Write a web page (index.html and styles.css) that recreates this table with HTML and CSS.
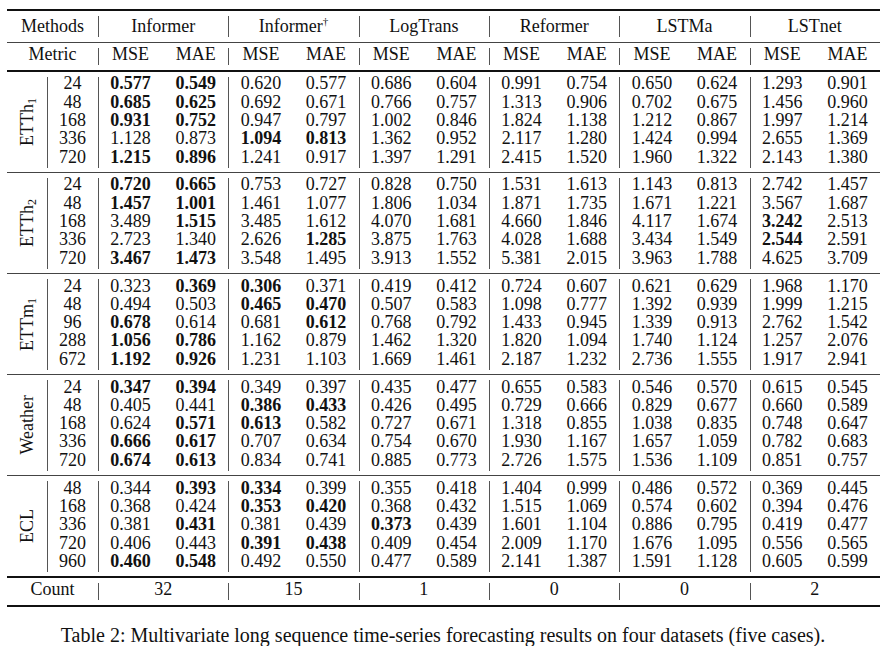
FILE: index.html
```html
<!DOCTYPE html>
<html>
<head>
<meta charset="utf-8">
<link rel="stylesheet" href="styles.css">
</head>
<body>
<div class="tbl">
  <div class="hrow methods">
    <div class="lead">Methods</div>
    <div class="grp bar">Informer</div>
    <div class="grp bar">Informer<sup>†</sup></div>
    <div class="grp bar">LogTrans</div>
    <div class="grp bar">Reformer</div>
    <div class="grp bar">LSTMa</div>
    <div class="grp bar">LSTnet</div>
  </div>
  <div class="hrow metric">
    <div class="lead">Metric</div>
    <div class="grp bar"><span>MSE</span><span>MAE</span></div>
    <div class="grp bar"><span>MSE</span><span>MAE</span></div>
    <div class="grp bar"><span>MSE</span><span>MAE</span></div>
    <div class="grp bar"><span>MSE</span><span>MAE</span></div>
    <div class="grp bar"><span>MSE</span><span>MAE</span></div>
    <div class="grp bar"><span>MSE</span><span>MAE</span></div>
  </div>

  <div class="group">
    <div class="label"><span>ETTh<sub>1</sub></span></div>
    <div class="hz bar"><div>24</div><div>48</div><div>168</div><div>336</div><div>720</div></div>
    <div class="blk bar">
      <div class="r"><b>0.577</b><b>0.549</b></div>
      <div class="r"><b>0.685</b><b>0.625</b></div>
      <div class="r"><b>0.931</b><b>0.752</b></div>
      <div class="r"><span>1.128</span><span>0.873</span></div>
      <div class="r"><b>1.215</b><b>0.896</b></div>
    </div>
    <div class="blk bar">
      <div class="r"><span>0.620</span><span>0.577</span></div>
      <div class="r"><span>0.692</span><span>0.671</span></div>
      <div class="r"><span>0.947</span><span>0.797</span></div>
      <div class="r"><b>1.094</b><b>0.813</b></div>
      <div class="r"><span>1.241</span><span>0.917</span></div>
    </div>
    <div class="blk bar">
      <div class="r"><span>0.686</span><span>0.604</span></div>
      <div class="r"><span>0.766</span><span>0.757</span></div>
      <div class="r"><span>1.002</span><span>0.846</span></div>
      <div class="r"><span>1.362</span><span>0.952</span></div>
      <div class="r"><span>1.397</span><span>1.291</span></div>
    </div>
    <div class="blk bar">
      <div class="r"><span>0.991</span><span>0.754</span></div>
      <div class="r"><span>1.313</span><span>0.906</span></div>
      <div class="r"><span>1.824</span><span>1.138</span></div>
      <div class="r"><span>2.117</span><span>1.280</span></div>
      <div class="r"><span>2.415</span><span>1.520</span></div>
    </div>
    <div class="blk bar">
      <div class="r"><span>0.650</span><span>0.624</span></div>
      <div class="r"><span>0.702</span><span>0.675</span></div>
      <div class="r"><span>1.212</span><span>0.867</span></div>
      <div class="r"><span>1.424</span><span>0.994</span></div>
      <div class="r"><span>1.960</span><span>1.322</span></div>
    </div>
    <div class="blk bar">
      <div class="r"><span>1.293</span><span>0.901</span></div>
      <div class="r"><span>1.456</span><span>0.960</span></div>
      <div class="r"><span>1.997</span><span>1.214</span></div>
      <div class="r"><span>2.655</span><span>1.369</span></div>
      <div class="r"><span>2.143</span><span>1.380</span></div>
    </div>
  </div>

  <div class="group">
    <div class="label"><span>ETTh<sub>2</sub></span></div>
    <div class="hz bar"><div>24</div><div>48</div><div>168</div><div>336</div><div>720</div></div>
    <div class="blk bar">
      <div class="r"><b>0.720</b><b>0.665</b></div>
      <div class="r"><b>1.457</b><b>1.001</b></div>
      <div class="r"><span>3.489</span><b>1.515</b></div>
      <div class="r"><span>2.723</span><span>1.340</span></div>
      <div class="r"><b>3.467</b><b>1.473</b></div>
    </div>
    <div class="blk bar">
      <div class="r"><span>0.753</span><span>0.727</span></div>
      <div class="r"><span>1.461</span><span>1.077</span></div>
      <div class="r"><span>3.485</span><span>1.612</span></div>
      <div class="r"><span>2.626</span><b>1.285</b></div>
      <div class="r"><span>3.548</span><span>1.495</span></div>
    </div>
    <div class="blk bar">
      <div class="r"><span>0.828</span><span>0.750</span></div>
      <div class="r"><span>1.806</span><span>1.034</span></div>
      <div class="r"><span>4.070</span><span>1.681</span></div>
      <div class="r"><span>3.875</span><span>1.763</span></div>
      <div class="r"><span>3.913</span><span>1.552</span></div>
    </div>
    <div class="blk bar">
      <div class="r"><span>1.531</span><span>1.613</span></div>
      <div class="r"><span>1.871</span><span>1.735</span></div>
      <div class="r"><span>4.660</span><span>1.846</span></div>
      <div class="r"><span>4.028</span><span>1.688</span></div>
      <div class="r"><span>5.381</span><span>2.015</span></div>
    </div>
    <div class="blk bar">
      <div class="r"><span>1.143</span><span>0.813</span></div>
      <div class="r"><span>1.671</span><span>1.221</span></div>
      <div class="r"><span>4.117</span><span>1.674</span></div>
      <div class="r"><span>3.434</span><span>1.549</span></div>
      <div class="r"><span>3.963</span><span>1.788</span></div>
    </div>
    <div class="blk bar">
      <div class="r"><span>2.742</span><span>1.457</span></div>
      <div class="r"><span>3.567</span><span>1.687</span></div>
      <div class="r"><b>3.242</b><span>2.513</span></div>
      <div class="r"><b>2.544</b><span>2.591</span></div>
      <div class="r"><span>4.625</span><span>3.709</span></div>
    </div>
  </div>

  <div class="group">
    <div class="label"><span>ETTm<sub>1</sub></span></div>
    <div class="hz bar"><div>24</div><div>48</div><div>96</div><div>288</div><div>672</div></div>
    <div class="blk bar">
      <div class="r"><span>0.323</span><b>0.369</b></div>
      <div class="r"><span>0.494</span><span>0.503</span></div>
      <div class="r"><b>0.678</b><span>0.614</span></div>
      <div class="r"><b>1.056</b><b>0.786</b></div>
      <div class="r"><b>1.192</b><b>0.926</b></div>
    </div>
    <div class="blk bar">
      <div class="r"><b>0.306</b><span>0.371</span></div>
      <div class="r"><b>0.465</b><b>0.470</b></div>
      <div class="r"><span>0.681</span><b>0.612</b></div>
      <div class="r"><span>1.162</span><span>0.879</span></div>
      <div class="r"><span>1.231</span><span>1.103</span></div>
    </div>
    <div class="blk bar">
      <div class="r"><span>0.419</span><span>0.412</span></div>
      <div class="r"><span>0.507</span><span>0.583</span></div>
      <div class="r"><span>0.768</span><span>0.792</span></div>
      <div class="r"><span>1.462</span><span>1.320</span></div>
      <div class="r"><span>1.669</span><span>1.461</span></div>
    </div>
    <div class="blk bar">
      <div class="r"><span>0.724</span><span>0.607</span></div>
      <div class="r"><span>1.098</span><span>0.777</span></div>
      <div class="r"><span>1.433</span><span>0.945</span></div>
      <div class="r"><span>1.820</span><span>1.094</span></div>
      <div class="r"><span>2.187</span><span>1.232</span></div>
    </div>
    <div class="blk bar">
      <div class="r"><span>0.621</span><span>0.629</span></div>
      <div class="r"><span>1.392</span><span>0.939</span></div>
      <div class="r"><span>1.339</span><span>0.913</span></div>
      <div class="r"><span>1.740</span><span>1.124</span></div>
      <div class="r"><span>2.736</span><span>1.555</span></div>
    </div>
    <div class="blk bar">
      <div class="r"><span>1.968</span><span>1.170</span></div>
      <div class="r"><span>1.999</span><span>1.215</span></div>
      <div class="r"><span>2.762</span><span>1.542</span></div>
      <div class="r"><span>1.257</span><span>2.076</span></div>
      <div class="r"><span>1.917</span><span>2.941</span></div>
    </div>
  </div>

  <div class="group">
    <div class="label"><span>Weather</span></div>
    <div class="hz bar"><div>24</div><div>48</div><div>168</div><div>336</div><div>720</div></div>
    <div class="blk bar">
      <div class="r"><b>0.347</b><b>0.394</b></div>
      <div class="r"><span>0.405</span><span>0.441</span></div>
      <div class="r"><span>0.624</span><b>0.571</b></div>
      <div class="r"><b>0.666</b><b>0.617</b></div>
      <div class="r"><b>0.674</b><b>0.613</b></div>
    </div>
    <div class="blk bar">
      <div class="r"><span>0.349</span><span>0.397</span></div>
      <div class="r"><b>0.386</b><b>0.433</b></div>
      <div class="r"><b>0.613</b><span>0.582</span></div>
      <div class="r"><span>0.707</span><span>0.634</span></div>
      <div class="r"><span>0.834</span><span>0.741</span></div>
    </div>
    <div class="blk bar">
      <div class="r"><span>0.435</span><span>0.477</span></div>
      <div class="r"><span>0.426</span><span>0.495</span></div>
      <div class="r"><span>0.727</span><span>0.671</span></div>
      <div class="r"><span>0.754</span><span>0.670</span></div>
      <div class="r"><span>0.885</span><span>0.773</span></div>
    </div>
    <div class="blk bar">
      <div class="r"><span>0.655</span><span>0.583</span></div>
      <div class="r"><span>0.729</span><span>0.666</span></div>
      <div class="r"><span>1.318</span><span>0.855</span></div>
      <div class="r"><span>1.930</span><span>1.167</span></div>
      <div class="r"><span>2.726</span><span>1.575</span></div>
    </div>
    <div class="blk bar">
      <div class="r"><span>0.546</span><span>0.570</span></div>
      <div class="r"><span>0.829</span><span>0.677</span></div>
      <div class="r"><span>1.038</span><span>0.835</span></div>
      <div class="r"><span>1.657</span><span>1.059</span></div>
      <div class="r"><span>1.536</span><span>1.109</span></div>
    </div>
    <div class="blk bar">
      <div class="r"><span>0.615</span><span>0.545</span></div>
      <div class="r"><span>0.660</span><span>0.589</span></div>
      <div class="r"><span>0.748</span><span>0.647</span></div>
      <div class="r"><span>0.782</span><span>0.683</span></div>
      <div class="r"><span>0.851</span><span>0.757</span></div>
    </div>
  </div>

  <div class="group last">
    <div class="label"><span>ECL</span></div>
    <div class="hz bar"><div>48</div><div>168</div><div>336</div><div>720</div><div>960</div></div>
    <div class="blk bar">
      <div class="r"><span>0.344</span><b>0.393</b></div>
      <div class="r"><span>0.368</span><span>0.424</span></div>
      <div class="r"><span>0.381</span><b>0.431</b></div>
      <div class="r"><span>0.406</span><span>0.443</span></div>
      <div class="r"><b>0.460</b><b>0.548</b></div>
    </div>
    <div class="blk bar">
      <div class="r"><b>0.334</b><span>0.399</span></div>
      <div class="r"><b>0.353</b><b>0.420</b></div>
      <div class="r"><span>0.381</span><span>0.439</span></div>
      <div class="r"><b>0.391</b><b>0.438</b></div>
      <div class="r"><span>0.492</span><span>0.550</span></div>
    </div>
    <div class="blk bar">
      <div class="r"><span>0.355</span><span>0.418</span></div>
      <div class="r"><span>0.368</span><span>0.432</span></div>
      <div class="r"><b>0.373</b><span>0.439</span></div>
      <div class="r"><span>0.409</span><span>0.454</span></div>
      <div class="r"><span>0.477</span><span>0.589</span></div>
    </div>
    <div class="blk bar">
      <div class="r"><span>1.404</span><span>0.999</span></div>
      <div class="r"><span>1.515</span><span>1.069</span></div>
      <div class="r"><span>1.601</span><span>1.104</span></div>
      <div class="r"><span>2.009</span><span>1.170</span></div>
      <div class="r"><span>2.141</span><span>1.387</span></div>
    </div>
    <div class="blk bar">
      <div class="r"><span>0.486</span><span>0.572</span></div>
      <div class="r"><span>0.574</span><span>0.602</span></div>
      <div class="r"><span>0.886</span><span>0.795</span></div>
      <div class="r"><span>1.676</span><span>1.095</span></div>
      <div class="r"><span>1.591</span><span>1.128</span></div>
    </div>
    <div class="blk bar">
      <div class="r"><span>0.369</span><span>0.445</span></div>
      <div class="r"><span>0.394</span><span>0.476</span></div>
      <div class="r"><span>0.419</span><span>0.477</span></div>
      <div class="r"><span>0.556</span><span>0.565</span></div>
      <div class="r"><span>0.605</span><span>0.599</span></div>
    </div>
  </div>

  <div class="hrow count">
    <div class="lead">Count</div>
    <div class="grp bar">32</div>
    <div class="grp bar">15</div>
    <div class="grp bar">1</div>
    <div class="grp bar">0</div>
    <div class="grp bar">0</div>
    <div class="grp bar">2</div>
  </div>
</div>
<p class="caption">Table 2: Multivariate long sequence time-series forecasting results on four datasets (five cases).</p>
</body>
</html>
```

FILE: styles.css
```css
html, body {
  margin: 0;
  padding: 0;
  background: #ffffff;
}

body {
  font-family: "Liberation Serif", "Times New Roman", Tinos, serif;
  font-size: 18px;
  color: #111111;
}

.tbl {
  margin: 9px 0 0 7px;
  width: 873px;
  border-top: 2px solid #111111;
}

.hrow {
  display: flex;
}

.hrow .lead {
  width: 91px;
  flex: none;
  text-align: center;
}

.hrow .grp {
  flex: 1 1 0;
  display: flex;
  justify-content: center;
}

.hrow .grp span {
  flex: 1 1 0;
  text-align: center;
}

.methods {
  height: 31px;
  line-height: 31px;
  border-bottom: 1px solid #444444;
}

.methods .grp,
.count .grp {
  display: block;
  text-align: center;
}

.methods sup {
  font-size: 11px;
  line-height: 0;
  vertical-align: 7px;
}

.metric {
  height: 27px;
  line-height: 23px;
  border-bottom: 2px solid #111111;
}

.count {
  height: 27px;
  line-height: 23px;
  border-top: 2px solid #111111;
  border-bottom: 2px solid #111111;
}

.bar {
  background-image: linear-gradient(#555555, #555555);
  background-repeat: no-repeat;
  background-position: 0 5px;
  background-size: 1px calc(100% - 10px);
}

.group .bar {
  background-size: 1px calc(100% - 9px);
}

.group {
  display: flex;
  border-bottom: 1px solid #444444;
  line-height: 18.3px;
}

.group.last {
  border-bottom: none;
}

.label {
  width: 40px;
  flex: none;
  display: flex;
  align-items: center;
  justify-content: center;
}

.label span {
  writing-mode: vertical-rl;
  transform: rotate(180deg);
  line-height: 18px;
  white-space: nowrap;
}

.label sub {
  font-size: 12px;
  line-height: 0;
}

.hz {
  width: 51px;
  flex: none;
  text-align: center;
  padding: 2.4px 0 6.2px;
}

.blk {
  flex: 1 1 0;
  padding: 2.4px 0 6.2px;
}

.r {
  display: flex;
}

.r span,
.r b {
  flex: 1 1 0;
  text-align: center;
}

.r b {
  font-weight: 700;
}

.caption {
  margin: 17px 0 0;
  font-size: 20px;
  line-height: 22px;
  text-align: center;
}
```
